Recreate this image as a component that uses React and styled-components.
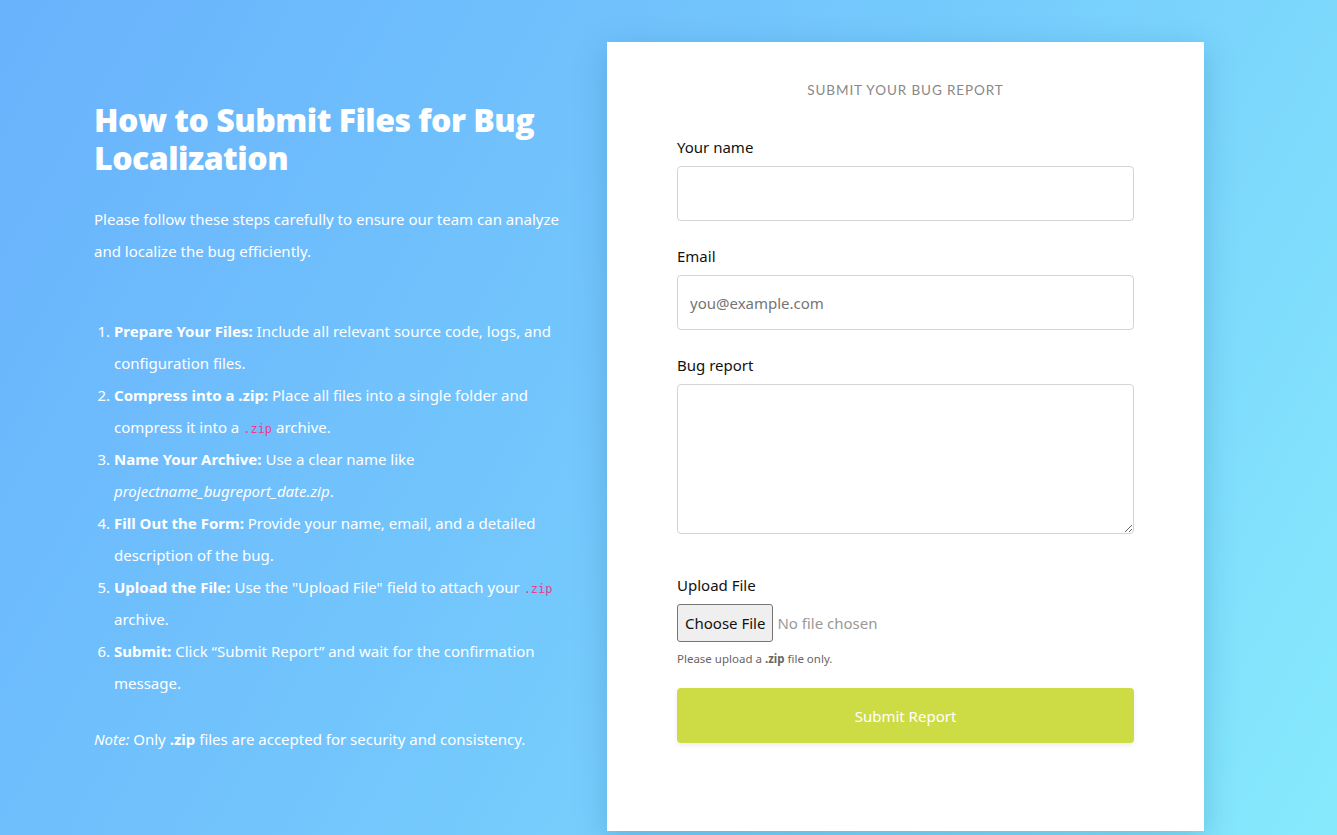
import React from "react";
import styled, { createGlobalStyle } from "styled-components";

const GlobalStyle = createGlobalStyle`
  html, body {
    margin: 0;
    padding: 0;
  }
  body {
    font-family: "Noto Sans", "Open Sans", sans-serif;
    background: linear-gradient(120deg, #69b2fc 0%, #74c9fc 50%, #87eafc 100%);
    min-height: 835px;
    overflow: hidden;
  }
  * {
    box-sizing: border-box;
  }
`;

const Page = styled.main`
  display: flex;
  align-items: flex-start;
  min-height: 835px;
  padding-left: 94px;
`;

const InfoColumn = styled.section`
  width: 472px;
  padding-top: 101px;
  color: #fff;
  font-size: 15px;
`;

const Heading = styled.h1`
  margin: 0 0 26px;
  font-family: "Open Sans", "Noto Sans", sans-serif;
  font-weight: 800;
  font-size: 32px;
  line-height: 38px;
  letter-spacing: -0.5px;
`;

const Intro = styled.p`
  margin: 0 0 48px;
  line-height: 32px;
`;

const Steps = styled.ol`
  margin: 0 0 24px;
  padding-left: 20px;
  line-height: 32px;
`;

const Step = styled.li`
  padding-left: 0;
`;

const Code = styled.code`
  font-family: "DejaVu Sans Mono", "Liberation Mono", monospace;
  font-size: 12px;
  line-height: 1;
  color: #e83e8c;
`;

const Note = styled.p`
  margin: 0;
  line-height: 32px;
`;

const Card = styled.section`
  margin-left: 41px;
  margin-top: 42px;
  width: 597px;
  background: #fff;
  padding: 38px 70px 88px 70px;
  box-shadow: 0 8px 30px rgba(20, 90, 140, 0.25);
`;

const CardTitle = styled.h2`
  margin: 0 0 35px;
  text-align: center;
  font-family: "Lato", "Noto Sans", sans-serif;
  font-weight: 400;
  font-size: 13.5px;
  line-height: 20px;
  letter-spacing: 0.9px;
  color: #888;
`;

const Field = styled.div`
  display: flex;
  flex-direction: column;
  margin-bottom: ${(p) => p.$gap || "23px"};
`;

const Label = styled.label`
  font-size: 15px;
  line-height: 24px;
  color: #111;
  margin-bottom: 7px;
`;

const Input = styled.input`
  width: 100%;
  height: 55px;
  border: 1px solid #d4d4d4;
  border-radius: 4px;
  padding: 0 12px;
  font-family: inherit;
  font-size: 15px;
  color: #333;
  outline: none;

  &::placeholder {
    color: #757575;
  }
`;

const TextArea = styled.textarea`
  width: 100%;
  height: 150px;
  border: 1px solid #d4d4d4;
  border-radius: 4px;
  padding: 12px;
  font-family: inherit;
  font-size: 15px;
  resize: vertical;
  outline: none;
`;

const FileInput = styled.input`
  font-family: inherit;
  font-size: 15px;
  color: #999;
  height: 38px;

  &::file-selector-button {
    font-family: inherit;
    font-size: 15px;
    color: #111;
    background: #efefef;
    border: 1px solid #767676;
    border-radius: 3px;
    height: 38px;
    padding: 0 7px;
    margin-right: 4px;
  }
`;

const Hint = styled.small`
  display: block;
  margin-top: 8px;
  font-size: 11.5px;
  line-height: 18px;
  color: #666;
`;

const SubmitButton = styled.button`
  width: 100%;
  height: 55px;
  margin-top: 20px;
  border: none;
  border-radius: 4px;
  background: #cddc45;
  color: #fff;
  font-family: inherit;
  font-size: 15px;
  box-shadow: 0 2px 5px rgba(0, 0, 0, 0.08);
  cursor: pointer;
`;

const steps = [
  {
    title: "Prepare Your Files:",
    body: <> Include all relevant source code, logs, and configuration files.</>,
  },
  {
    title: "Compress into a .zip:",
    body: (
      <>
        {" "}Place all files into a single folder and compress it into a <Code>.zip</Code> archive.
      </>
    ),
  },
  {
    title: "Name Your Archive:",
    body: (
      <>
        {" "}Use a clear name like <em>projectname_bugreport_date.zip</em>.
      </>
    ),
  },
  {
    title: "Fill Out the Form:",
    body: <> Provide your name, email, and a detailed description of the bug.</>,
  },
  {
    title: "Upload the File:",
    body: (
      <>
        {" "}Use the "Upload File" field to attach your <Code>.zip</Code> archive.
      </>
    ),
  },
  {
    title: "Submit:",
    body: <> Click “Submit Report” and wait for the confirmation message.</>,
  },
];

export default function App() {
  return (
    <>
      <GlobalStyle />
      <Page>
        <InfoColumn>
          <Heading>How to Submit Files for Bug Localization</Heading>
          <Intro>
            Please follow these steps carefully to ensure our team can analyze
            and localize the bug efficiently.
          </Intro>
          <Steps>
            {steps.map((s) => (
              <Step key={s.title}>
                <strong>{s.title}</strong>
                {s.body}
              </Step>
            ))}
          </Steps>
          <Note>
            <em>Note:</em> Only <strong>.zip</strong> files are accepted for
            security and consistency.
          </Note>
        </InfoColumn>

        <Card>
          <CardTitle>SUBMIT YOUR BUG REPORT</CardTitle>
          <form onSubmit={(e) => e.preventDefault()}>
            <Field>
              <Label htmlFor="name">Your name</Label>
              <Input id="name" type="text" />
            </Field>
            <Field>
              <Label htmlFor="email">Email</Label>
              <Input id="email" type="email" placeholder="you@example.com" />
            </Field>
            <Field $gap="39px">
              <Label htmlFor="report">Bug report</Label>
              <TextArea id="report" />
            </Field>
            <Field $gap="0">
              <Label htmlFor="file">Upload File</Label>
              <FileInput id="file" type="file" accept=".zip" />
              <Hint>
                Please upload a <strong>.zip</strong> file only.
              </Hint>
            </Field>
            <SubmitButton type="submit">Submit Report</SubmitButton>
          </form>
        </Card>
      </Page>
    </>
  );
}
